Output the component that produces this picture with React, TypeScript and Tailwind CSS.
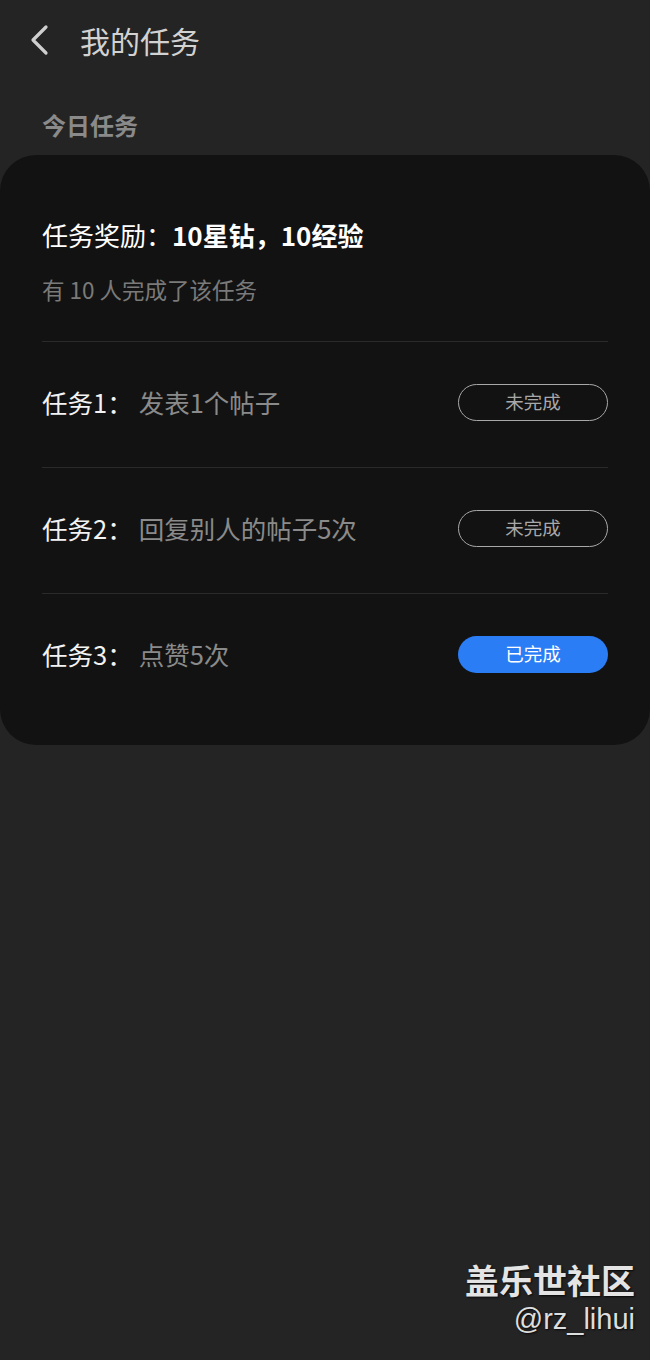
import React from "react";

const font = { fontFamily: '"Noto Sans CJK SC", "Noto Sans", sans-serif' };

function Row({ label, desc, done, last }: { label: string; desc: string; done: boolean; last?: boolean }) {
  return (
    <div className={`flex items-center justify-between pb-[5px] ${last ? "h-[125px]" : "h-[126px] border-b border-[#2a2a2a]"}`}>
      <div className="flex items-center text-[25.5px] leading-[32px]">
        <span className="text-[#f2f2f2]">{label}</span>
        <span className="ml-[6px] text-[#8a8a8a]">{desc}</span>
      </div>
      {done ? (
        <div className="flex h-[37px] w-[150px] items-center justify-center rounded-full bg-[#2b7df5] text-[18.5px] text-white">
          已完成
        </div>
      ) : (
        <div className="flex h-[37px] w-[150px] items-center justify-center rounded-full border-[1.5px] border-[#a8a8a8] text-[18.5px] text-[#a8a8a8]">
          未完成
        </div>
      )}
    </div>
  );
}

export default function App() {
  return (
    <div className="flex min-h-[1360px] w-[650px] flex-col bg-[#242424]" style={font}>
      <div className="flex h-[80px] items-center">
        <svg width="20" height="32" viewBox="0 0 20 32" className="ml-[29px]">
          <path d="M17 3 L4 16 L17 29" fill="none" stroke="#cfcfcf" strokeWidth="3.2" strokeLinecap="round" strokeLinejoin="round" />
        </svg>
        <span className="ml-[31px] text-[30px] leading-[36px] text-[#d2d2d2]">我的任务</span>
      </div>
      <div className="flex h-[75px] items-start pl-[42px] pt-[29px]">
        <span className="text-[24px] font-bold leading-[32px] text-[#8a8a8a]">今日任务</span>
      </div>
      <div className="rounded-[36px] bg-[#121212] px-[42px] pt-[64px] pb-[26px]">
        <div className="text-[26px] leading-[32px] text-white">
          任务奖励：<span className="font-bold">10星钻，10经验</span>
        </div>
        <div className="mt-[23px] text-[22.5px] leading-[30px] text-[#7a7a7a]">有 10 人完成了该任务</div>
        <div className="mt-[37px] border-b border-[#2a2a2a]" />
        <Row label="任务1：" desc="发表1个帖子" done={false} />
        <Row label="任务2：" desc="回复别人的帖子5次" done={false} />
        <Row label="任务3：" desc="点赞5次" done={true} last />
      </div>
      <div className="mt-auto flex flex-col items-end pr-[15px] pb-[24px]">
        <span
          className="text-[34px] font-bold leading-[40px] text-[#e4e4e4]"
          style={{ textShadow: "1px 1px 2px rgba(0,0,0,0.8)" }}
        >
          盖乐世社区
        </span>
        <span
          className="mt-[2px] text-[29px] leading-[34px] text-[#dedede]"
          style={{ fontFamily: '"Liberation Sans", Arial, sans-serif', textShadow: "1px 1px 2px rgba(0,0,0,0.8)" }}
        >
          @rz_lihui
        </span>
      </div>
    </div>
  );
}
